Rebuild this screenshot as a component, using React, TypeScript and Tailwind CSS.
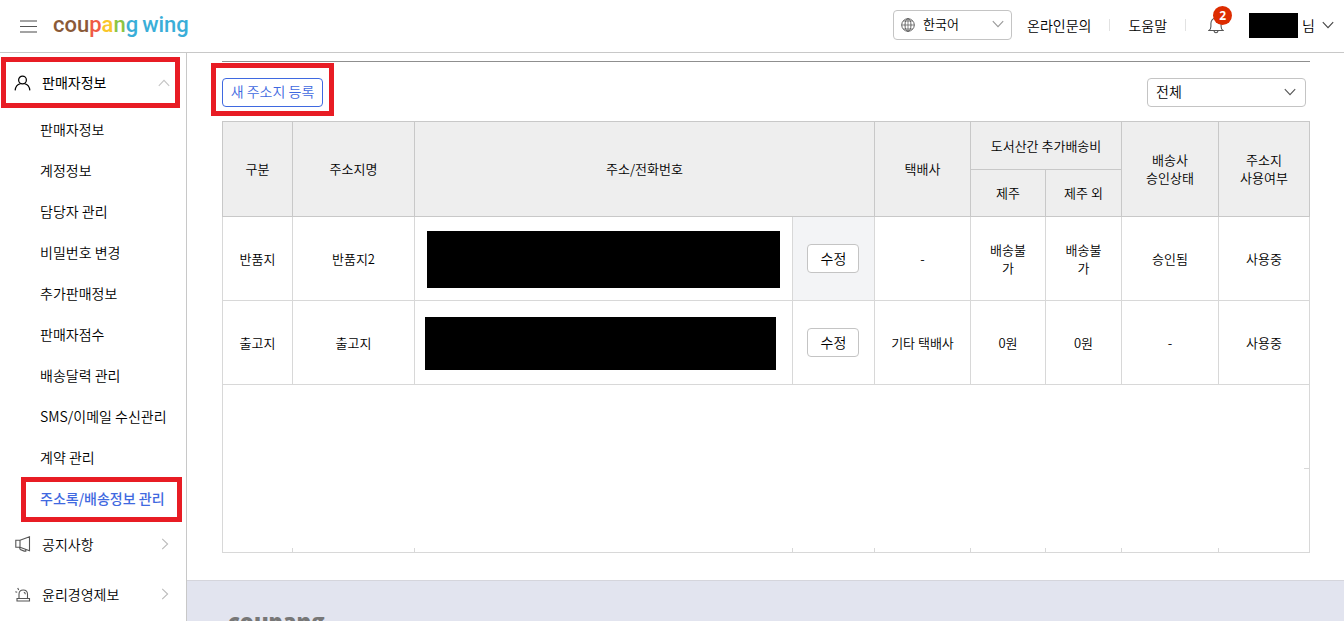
import type { ReactNode } from "react";

type IconProps = { className?: string };

function Chevron({ className = "" }: IconProps) {
  return (
    <svg viewBox="0 0 12 8" fill="none" stroke="currentColor" strokeWidth="1.1" className={className} aria-hidden="true">
      <path d="M0.8 1.2 6 6.6 11.2 1.2" />
    </svg>
  );
}

function GlobeIcon({ className = "" }: IconProps) {
  return (
    <svg viewBox="0 0 14 14" fill="none" stroke="currentColor" strokeWidth="0.9" className={className} aria-hidden="true">
      <circle cx="7" cy="7" r="6.3" />
      <ellipse cx="7" cy="7" rx="3" ry="6.3" />
      <path d="M7 .7v12.600M.7 7h12.600M2.200 3h9.600M2.200 11h9.600" strokeWidth="0.7" />
    </svg>
  );
}

function BellIcon({ className = "" }: IconProps) {
  return (
    <svg viewBox="0 0 16 18" fill="none" stroke="currentColor" strokeWidth="1.1" className={className} aria-hidden="true">
      <path d="M1 14.5h14c-1.5-1-1.9-2.200-1.900-4V7.500C13.100 4.300 11 2 8 2S2.900 4.300 2.900 7.500v3c0 1.800-.4 3-1.900 4ZM8 2V.6M6 14.800c.2 1.200.9 1.900 2 1.900s1.800-.7 2-1.900" />
    </svg>
  );
}

function PersonIcon({ className = "" }: IconProps) {
  return (
    <svg viewBox="0 0 18 16" fill="none" stroke="currentColor" strokeWidth="1.300" className={className} aria-hidden="true">
      <circle cx="9" cy="4.800" r="4.100" />
      <path d="M1.200 15.800c.4-4.200 2.400-6.300 5.600-7M16.800 15.800c-.4-4.200-2.400-6.300-5.600-7" />
    </svg>
  );
}

function MegaphoneIcon({ className = "" }: IconProps) {
  return (
    <svg viewBox="0 0 16 16" fill="none" stroke="currentColor" strokeWidth="1.1" className={className} aria-hidden="true">
      <path d="M.8 4.300h4.200v7H.8ZM5 4.300 14.500.8v14L5 11.300M4.500 11.500l.8 2 3.900 1.600h1.600v-1.600" />
    </svg>
  );
}

function SirenIcon({ className = "" }: IconProps) {
  return (
    <svg viewBox="0 0 16 15" fill="none" stroke="currentColor" strokeWidth="1.1" className={className} aria-hidden="true">
      <path d="M4 11.500V7.200c0-2.500 1.400-4.200 4.200-4.200s4.300 1.700 4.300 4.200v4.300M2 11.500h12.500v2.500H2ZM8.800 5.300c1 .2 1.500.9 1.500 1.900M.3 4.700l1.900.5M2.700 1l1 1.900" />
    </svg>
  );
}

const subMenu = [
  "판매자정보",
  "계정정보",
  "담당자 관리",
  "비밀번호 변경",
  "추가판매정보",
  "판매자점수",
  "배송달력 관리",
  "SMS/이메일 수신관리",
  "계약 관리",
  "주소록/배송정보 관리",
];

const rows = [
  {
    kind: "반품지",
    name: "반품지2",
    mask: "ml-3 mr-3 h-[57px]",
    editBg: "bg-[#f3f4f6]",
    courier: "-",
    jeju: "배송불가",
    other: "배송불가",
    approval: "승인됨",
    usage: "사용중",
  },
  {
    kind: "출고지",
    name: "출고지",
    mask: "ml-[10px] mr-4 h-[53px]",
    editBg: "bg-white",
    courier: "기타 택배사",
    jeju: "0원",
    other: "0원",
    approval: "-",
    usage: "사용중",
  },
];

const columns = ["kind", "name", "address", "edit", "courier", "jeju", "other", "approval", "usage"];

function Header() {
  return (
    <header className="flex h-[53px] shrink-0 items-center border-b border-[#c8c8c8] pr-[10px] pb-[2px] pl-5">
      <button type="button" aria-label="메뉴" className="mt-[2px] flex w-[17px] flex-col gap-1">
        <span className="h-[2px] bg-[#a3a3a3]" />
        <span className="h-px bg-[#555]" />
        <span className="h-[2px] bg-[#a3a3a3]" />
      </button>
      <a
        href="#"
        className="ml-4 flex items-center gap-1 font-[Roboto,sans-serif] text-[22px] leading-8 font-medium text-[#3aaed8]"
      >
        <span>
          <span className="text-[#8a5a38]">cou</span>
          <span className="text-[#ef5a45]">p</span>
          <span className="text-[#fac62a]">a</span>
          <span className="text-[#8cc443]">n</span>g
        </span>
        <span>wing</span>
      </a>
      <div className="ml-auto flex items-center text-[14px]">
        <div className="relative">
          <GlobeIcon className="pointer-events-none absolute top-2 left-2 h-[14px] w-[14px] text-[#555]" />
          <select
            aria-label="언어"
            className="block h-[30px] w-[119px] appearance-none rounded-[4px] border border-[#c4c4c4] bg-white pb-[2px] pl-[29px] text-[13px]"
          >
            <option>한국어</option>
          </select>
          <Chevron className="pointer-events-none absolute top-[10px] right-2 h-2 w-3 text-[#999]" />
        </div>
        <a href="#" className="ml-[15px]">온라인문의</a>
        <span className="mx-[18px] h-3 w-px bg-[#e2e2e2]" />
        <a href="#">도움말</a>
        <span className="mx-[18px] h-3 w-px bg-[#e2e2e2]" />
        <button type="button" aria-label="알림" className="relative ml-1">
          <BellIcon className="h-[18px] w-4 text-[#555]" />
          <span className="absolute -top-[10px] left-[5px] flex h-[19px] w-[19px] items-center justify-center rounded-full bg-[#dd2c00] font-['Noto_Sans',sans-serif] text-[12px] font-bold text-white">
            2
          </span>
        </button>
        <button type="button" className="ml-[25px] flex items-center">
          <span className="h-[25px] w-[49px] bg-black" />
          <span className="ml-1">님</span>
          <Chevron className="ml-[7px] h-2 w-3 text-[#444]" />
        </button>
      </div>
    </header>
  );
}

function MenuGroup({ icon, label }: { icon: ReactNode; label: string }) {
  return (
    <a href="#" className="flex h-[50px] items-center pr-[15px] pb-[2px] pl-[15px]">
      <span className="flex w-[27px] items-center">{icon}</span>
      <span>{label}</span>
      <Chevron className="ml-auto h-2 w-3 -rotate-90 text-[#bbb]" />
    </a>
  );
}

function Sidebar() {
  return (
    <aside className="w-[187px] shrink-0 border-r border-[#c8c8c8] pt-1 text-[14px]">
      <button type="button" className="relative flex h-[53px] w-full items-center pr-4 pb-[2px] pl-[14px] font-normal">
        <span className="absolute top-0 right-[6px] bottom-[2px] left-px border-5 border-[#e81c24]" />
        <span className="w-7">
          <PersonIcon className="h-4 w-[17px]" />
        </span>
        <span>판매자정보</span>
        <Chevron className="ml-auto h-2 w-3 rotate-180 text-[#c4c4c4]" />
      </button>
      <ul>
        {subMenu.map((item, i) => {
          const active = i === subMenu.length - 1;
          return (
            <li key={item} className="relative">
              {active && <span className="absolute -top-[2px] right-1 -bottom-[2px] left-[21px] border-5 border-[#e81c24]" />}
              <a
                href="#"
                className={`flex h-[41px] items-center pb-[2px] pl-10 whitespace-nowrap ${active ? "font-medium text-[#3f69e0]" : ""}`}
              >
                {item}
              </a>
            </li>
          );
        })}
      </ul>
      <MenuGroup icon={<MegaphoneIcon className="h-4 w-4 text-[#555]" />} label="공지사항" />
      <MenuGroup icon={<SirenIcon className="h-[15px] w-4 text-[#555]" />} label="윤리경영제보" />
    </aside>
  );
}

function AddressTable() {
  const head = "border border-[#c8c8c8] p-0 font-[350]";
  const cell = "border border-[#d8d8d8] p-0";
  return (
    <table className="mt-[14px] w-full table-fixed border-collapse text-center text-[13px] leading-[18px]">
      <colgroup>
        <col className="w-[70px]" />
        <col className="w-[122px]" />
        <col />
        <col className="w-[82px]" />
        <col className="w-[96px]" />
        <col className="w-[75px]" />
        <col className="w-[76px]" />
        <col className="w-[97px]" />
        <col className="w-[91px]" />
      </colgroup>
      <thead className="bg-[#eee]">
        <tr className="h-12">
          <th rowSpan={2} className={head}>구분</th>
          <th rowSpan={2} className={head}>주소지명</th>
          <th rowSpan={2} colSpan={2} className={head}>주소/전화번호</th>
          <th rowSpan={2} className={head}>택배사</th>
          <th colSpan={2} className={head}>도서산간 추가배송비</th>
          <th rowSpan={2} className={head}>배송사<br />승인상태</th>
          <th rowSpan={2} className={head}>주소지<br />사용여부</th>
        </tr>
        <tr className="h-[47px]">
          <th className={head}>제주</th>
          <th className={head}>제주 외</th>
        </tr>
      </thead>
      <tbody>
        {rows.map((r) => (
          <tr key={r.kind} className="h-[84px]">
            <td className={cell}>{r.kind}</td>
            <td className={cell}>{r.name}</td>
            <td className={`${cell} pt-[2px]`}>
              <div className={`bg-black ${r.mask}`} />
            </td>
            <td className={`${cell} ${r.editBg}`}>
              <button type="button" className="h-[29px] w-[52px] rounded-[4px] border border-[#c4c4c4] bg-white pb-[2px] text-[14px]">
                수정
              </button>
            </td>
            <td className={cell}>{r.courier}</td>
            <td className={`${cell} px-4`}>{r.jeju}</td>
            <td className={`${cell} px-4`}>{r.other}</td>
            <td className={cell}>{r.approval}</td>
            <td className={cell}>{r.usage}</td>
          </tr>
        ))}
        <tr className="h-[163px]">
          <td colSpan={9} className="relative border-x border-[#d8d8d8]">
            <span className="absolute right-0 bottom-[79px] h-px w-[5px] bg-[#d8d8d8]" />
          </td>
        </tr>
        <tr className="h-[5px]">
          {columns.map((key) => (
            <td key={key} className="border-x border-b border-[#d8d8d8] p-0" />
          ))}
        </tr>
      </tbody>
    </table>
  );
}

export default function App() {
  return (
    <div className="flex h-screen flex-col overflow-hidden bg-white font-['Noto_Sans_CJK_KR',sans-serif] font-[350] text-black">
      <Header />
      <div className="flex min-h-0 grow">
        <Sidebar />
        <main className="flex min-w-0 grow flex-col pt-2">
          <section className="mr-[34px] ml-[35px] border-t border-[#8f8f8f] pt-4">
            <div className="flex items-center justify-between pr-1">
              <div className="relative">
                <button
                  type="button"
                  className="block h-[29px] w-[101px] rounded-[4px] border border-[#3f69e0] pb-[2px] text-[14px] text-[#3f69e0]"
                >
                  새 주소지 등록
                </button>
                <span className="pointer-events-none absolute -top-[15px] -right-[11px] -bottom-[9px] -left-[11px] border-5 border-[#e81c24]" />
              </div>
              <div className="relative">
                <select
                  aria-label="구분"
                  className="block h-[29px] w-[159px] appearance-none rounded-[4px] border border-[#c4c4c4] bg-white pb-[2px] pl-2 text-[14px]"
                >
                  <option>전체</option>
                </select>
                <Chevron className="pointer-events-none absolute top-[10px] right-[10px] h-2 w-3 text-[#555]" />
              </div>
            </div>
            <AddressTable />
          </section>
          <footer className="mt-[27px] shrink-0 border-t border-[#d5d5dc] bg-[#e2e4ef] px-[41px] pt-6 pb-10">
            <p className="font-['Open_Sans',sans-serif] text-[22px] leading-8 font-extrabold text-[#777]">coupang</p>
          </footer>
        </main>
      </div>
    </div>
  );
}
